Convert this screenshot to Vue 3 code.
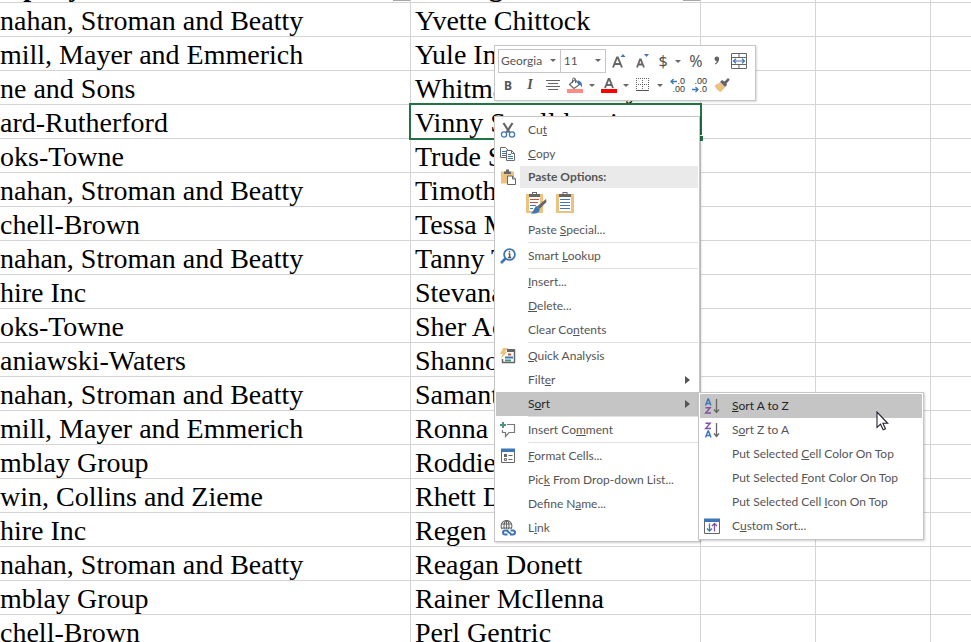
<script setup>
const rows = [
  ['nahan, Stroman and Beatty', 'Yvette Chittock'],
  ['mill, Mayer and Emmerich', 'Yule Ingold'],
  ['ne and Sons', 'Whitman McCarthy'],
  ['ard-Rutherford', 'Vinny Smallthwaite'],
  ['oks-Towne', 'Trude Sawyer'],
  ['nahan, Stroman and Beatty', 'Timothy'],
  ['chell-Brown', 'Tessa Marsh'],
  ['nahan, Stroman and Beatty', 'Tanny Tome'],
  ['hire Inc', 'Stevana'],
  ['oks-Towne', 'Sher Acton'],
  ['aniawski-Waters', 'Shannon'],
  ['nahan, Stroman and Beatty', 'Samantha'],
  ['mill, Mayer and Emmerich', 'Ronna'],
  ['mblay Group', 'Roddie'],
  ['win, Collins and Zieme', 'Rhett Dale'],
  ['hire Inc', 'Regen'],
  ['nahan, Stroman and Beatty', 'Reagan Donett'],
  ['mblay Group', 'Rainer McIlenna'],
  ['chell-Brown', 'Perl Gentric'],
]
const selectedRow = 3

// Labels are split as [before, access key, after].
const beforePaste = [
  { icon: 'cut', label: ['Cu', 't', ''] },
  { icon: 'copy', label: ['', 'C', 'opy'] },
]
const afterPaste = [
  { label: ['Paste ', 'S', 'pecial...'] },
  { sep: true },
  { icon: 'lookup', label: ['Smart ', 'L', 'ookup'] },
  { sep: true },
  { label: ['', 'I', 'nsert...'] },
  { label: ['', 'D', 'elete...'] },
  { label: ['Clear Co', 'n', 'tents'] },
  { sep: true },
  { icon: 'quick', label: ['', 'Q', 'uick Analysis'] },
  { label: ['Filt', 'e', 'r'], more: true },
  { label: ['S', 'o', 'rt'], more: true, active: true },
  { sep: true },
  { icon: 'comment', label: ['Insert Co', 'm', 'ment'] },
  { sep: true },
  { icon: 'format', label: ['', 'F', 'ormat Cells...'] },
  { label: ['Pic', 'k', ' From Drop-down List...'] },
  { label: ['Define N', 'a', 'me...'] },
  { icon: 'link', label: ['L', 'i', 'nk'] },
]
const sortItems = [
  { icon: 'az', label: ['', 'S', 'ort A to Z'], active: true },
  { icon: 'za', label: ['S', 'o', 'rt Z to A'] },
  { label: ['Put Selected ', 'C', 'ell Color On Top'] },
  { label: ['Put Selected ', 'F', 'ont Color On Top'] },
  { label: ['Put Selected Cell ', 'I', 'con On Top'] },
  { icon: 'custom', label: ['C', 'u', 'stom Sort...'] },
]

const icons = {
  cut: '<path d="M3.500 1 L9.500 10.500 M12.500 1 L6.500 10.500" stroke="#666" stroke-width="2.200" fill="none"/><g fill="none" stroke="#3f77b5" stroke-width="1.300"><circle cx="4" cy="12.500" r="2.600"/><circle cx="12" cy="12.500" r="2.600"/></g>',
  copy: '<g fill="#fff" stroke="#6a6a6a"><path d="M.5 1.500h5l3 3v7h-8z"/><path d="M6.500 4.500h5l3 3v7h-8z"/><path d="M11.500 4.500v3h3" fill="none"/></g><path d="M2 5.500h4M2 7.500h4M2 9.500h4M8 8.500h3M8 10.500h5M8 12.500h5" stroke="#3f77b5"/>',
  paste: '<path d="M1 2.500h13v12H1z" fill="#ecc27f"/><path d="M4 5V2.500h2V.5h3v2h2V5z" fill="#666"/><path d="M7.500 7h5l3 3v5.500h-8z" fill="#fff" stroke="#666"/><path d="M12.500 7v3h3" fill="none" stroke="#666"/>',
  lookup: '<circle cx="9.500" cy="6.500" r="5.400" fill="#fff" stroke="#3f77b5" stroke-width="1.800"/><path d="M5.500 10.500L1 15" stroke="#3f77b5" stroke-width="2.600"/><path d="M9.500 3v1.600M8.500 6h1.200v3.500M8 9.500h3.200" stroke="#555" stroke-width="1.400" fill="none"/>',
  quick: '<path d="M7 2.500h8M14.500 1.500v13M2 14.500h13M2.500 11v4" stroke="#666" stroke-width="1.500" fill="none"/><path d="M7 1h8v3H7z" fill="#666"/><path d="M3 0h5L5 4h2L1 11l1.500-5H0z" fill="#ecc27f"/><path d="M8 6.500h3" stroke="#d35230" stroke-width="2"/><path d="M5 9.500h8" stroke="#3f77b5" stroke-width="2"/><path d="M5 12.500h6" stroke="#4c9482" stroke-width="2"/>',
  comment: '<path d="M7 2.500h7.500v8H9l-3.500 4v-4h-3V8" fill="none" stroke="#777" stroke-width="1.200"/><path d="M3 0v6M0 3h6" stroke="#4c9482" stroke-width="2"/>',
  format: '<path d="M1.500 1.500h13v13h-13z" fill="#fff" stroke="#666"/><path d="M1 .5h14V4H1z" fill="#3f77b5"/><path d="M4 6h3v3H4z" fill="#666"/><path d="M4.500 10.500h2v2h-2z" fill="none" stroke="#666"/><path d="M8.500 7.500h4M8.500 11.500h4" stroke="#666"/>',
  link: '<g fill="none" stroke="#666" stroke-width="1.100"><circle cx="6.500" cy="6" r="5.400"/><ellipse cx="6.500" cy="6" rx="2.500" ry="5.400"/><path d="M1.500 4h10M1.500 8h10M6.500 1v10"/></g><path d="M2 9h14v7H2z" fill="#fff"/><g fill="none" stroke="#3f77b5" stroke-width="2"><path d="M8.500 10.500H5a2 2 0 0 0 0 4h2.500"/><path d="M10 14.500h3a2 2 0 0 0 0-4h-2.500"/><path d="M7 11l4 3"/></g>',
  az: '<path d="M1.500 7.500L4 1h.5L7 7.500M2.500 5.500h3.500" fill="none" stroke="#3f77b5" stroke-width="1.400"/><path d="M1.500 9.700h4.700L1.700 15H7" fill="none" stroke="#80539c" stroke-width="1.400"/><path d="M12.500 1v13M10 11.500l2.500 3 2.500-3" fill="none" stroke="#666" stroke-width="1.300"/>',
  za: '<path d="M1.500 1.200h4.700L1.700 6.500H7" fill="none" stroke="#80539c" stroke-width="1.400"/><path d="M1.500 15.500L4 9h.5L7 15.500M2.500 13.500h3.500" fill="none" stroke="#3f77b5" stroke-width="1.400"/><path d="M12.500 1v13M10 11.500l2.500 3 2.500-3" fill="none" stroke="#666" stroke-width="1.300"/>',
  custom: '<path d="M.5 1.500h15v14H.5z" fill="#fff" stroke="#666"/><path d="M0 .5h16V4H0z" fill="#3f77b5"/><path d="M5.500 5.500v7M3 10.500l2.500 2.500L8 10.500" fill="none" stroke="#3f77b5" stroke-width="1.300"/><path d="M10.500 13.500V6M8 8l2.500-2.500L13 8" fill="none" stroke="#80539c" stroke-width="1.300"/>',
}
</script>

<template>
  <main class="sheet">
    <table class="grid">
      <colgroup><col class="c-company"><col class="c-name"><col class="c-std"><col class="c-std"><col></colgroup>
      <thead>
        <tr>
          <th><div class="head"><span>mpany</span><button class="filter" aria-label="Filter company"></button></div></th>
          <th><div class="head named"><span>Manager</span><button class="filter" aria-label="Filter manager"></button></div></th>
          <th></th><th></th><th></th>
        </tr>
      </thead>
      <tbody>
        <tr v-for="(r, i) in rows" :key="i">
          <td>{{ r[0] }}</td>
          <td class="name" :class="{ selected: i === selectedRow }">{{ r[1] }}</td>
          <td></td><td></td><td></td>
        </tr>
      </tbody>
    </table>

    <div class="mini" role="toolbar" aria-label="Formatting">
      <div class="line">
        <label class="combo font"><select aria-label="Font"><option>Georgia</option></select><i class="caret"></i></label>
        <label class="combo size"><select aria-label="Font size"><option>11</option></select><i class="caret"></i></label>
        <button class="w26" aria-label="Increase font size"><svg width="16" height="16" viewBox="0 0 16 16"><path d="M2 14.500L6 4.500h.8L11 14.500M3.500 11h6" fill="none" stroke="#666" stroke-width="1.900"/><path d="M9.500 4L12 1l2.500 3z" fill="#3f77b5"/></svg></button>
        <button class="w22" aria-label="Decrease font size"><svg width="16" height="16" viewBox="0 0 16 16"><path d="M2 14.500L5 6.500h.8L9 14.500M3.500 11.500h4.500" fill="none" stroke="#666" stroke-width="1.800"/><path d="M9 1h5l-2.500 3z" fill="#3f77b5"/></svg></button>
        <button class="w18 sign">$</button>
        <button class="w12" aria-label="Currency options"><i class="caret"></i></button>
        <button class="w24 sign">%</button>
        <button class="w18" aria-label="Comma style"><svg width="8" height="10" viewBox="0 0 8 10"><path d="M1.500 2.800a2.300 2.300 0 0 1 4.700 0c0 2.500-1.500 4.500-3.900 5.700l-.5-.8c1.200-.8 1.800-1.600 1.900-2.600C2.500 5.200 1.500 4.200 1.500 2.800z" fill="#666"/></svg></button>
        <button class="w26" aria-label="Merge and center"><svg width="16" height="16" viewBox="0 0 16 16"><path d="M.5.500h15v15H.500zM.5 4.500h15M.5 11.500h15M8 .5v4M8 11.500v4" fill="none" stroke="#666"/><path d="M2.500 8h11M5 5.800L2.500 8 5 10.200M11 5.800L13.500 8 11 10.200" fill="none" stroke="#3f77b5" stroke-width="1.200"/></svg></button>
      </div>
      <div class="line">
        <button class="w20 bold">B</button>
        <button class="w24 italic">I</button>
        <button class="w22" aria-label="Center"><svg width="14" height="12" viewBox="0 0 14 12"><path d="M0 1.500h14M2 4.500h10M0 7.500h14M2 10.500h10" stroke="#666"/></svg></button>
        <button class="w22" aria-label="Fill color"><svg width="16" height="16" viewBox="0 0 16 16"><path d="M2.500 7.500L8 2.500l4.500 5L7 11.500z" fill="#fff" stroke="#666" stroke-width="1.200"/><path d="M5.500 6V2.500a1.500 1.500 0 0 1 3 0V6" fill="none" stroke="#666"/><path d="M10.500 3.500c3 0 5 2 4.500 7-1-1.500-1.500-3-3.500-3.500z" fill="#3f77b5"/><path d="M0 12h16v4H0z" fill="#ff8b82"/></svg></button>
        <button class="w12" aria-label="Fill options"><i class="caret"></i></button>
        <button class="w22" aria-label="Font color"><svg width="16" height="16" viewBox="0 0 16 16"><path d="M4 11L7.600 2h.8L12 11M5.500 8h5" fill="none" stroke="#666" stroke-width="1.900"/><path d="M0 12h16v4H0z" fill="#f00"/></svg></button>
        <button class="w12" aria-label="Font color options"><i class="caret"></i></button>
        <button class="w22" aria-label="Borders"><svg width="14" height="14" viewBox="0 0 14 14"><path d="M.5 0v12M6.500 0v12M12.500 0v12M0 .5h13M0 6.500h13" stroke="#666" stroke-dasharray="1 1"/><path d="M0 12.500h13" stroke="#555"/></svg></button>
        <button class="w12" aria-label="Border options"><i class="caret"></i></button>
        <button class="w22 dec" aria-label="Increase decimal"><span><svg width="7" height="7" viewBox="0 0 7 7"><path d="M7 3.500H1M3.500 1L1 3.500 3.500 6" fill="none" stroke="#3f77b5" stroke-width="1.300"/></svg>.0</span><span>.00</span></button>
        <button class="w22 dec" aria-label="Decrease decimal"><span>.00</span><span><svg width="7" height="7" viewBox="0 0 7 7"><path d="M0 3.500h6M3.500 1L6 3.500 3.500 6" fill="none" stroke="#3f77b5" stroke-width="1.300"/></svg>.0</span></button>
        <button class="w24" aria-label="Format painter"><svg width="16" height="16" viewBox="0 0 16 16"><path d="M.5 8.500L6 5.500l5 5-4 4.500c-2 0-5-3-6.500-6.500z" fill="#ecc27f"/><path d="M6 5l2-2 2.500 1.500L14 1l1.800 1.800L12.500 6.500 13 8l-2 2z" fill="#666"/></svg></button>
      </div>
    </div>

    <div class="menu context" role="menu">
      <button v-for="m in beforePaste" :key="m.icon" class="item" role="menuitem">
        <svg class="icon" width="16" height="16" viewBox="0 0 16 16" v-html="icons[m.icon]"></svg>
        <span>{{ m.label[0] }}<u>{{ m.label[1] }}</u>{{ m.label[2] }}</span>
      </button>
      <div class="paste-head">
        <svg class="icon" width="16" height="16" viewBox="0 0 16 16" v-html="icons.paste"></svg>
        <strong>Paste Options:</strong>
      </div>
      <div class="paste-row">
        <button aria-label="Keep source formatting"><svg width="22" height="24" viewBox="0 0 22 24"><path d="M1 3h17v19H1z" fill="#ecc27f"/><path d="M4 5h11v15H4z" fill="#fff"/><path d="M4 6V3h3V1h5v2h3v3z" fill="#666"/><path d="M8 2.500h3" stroke="#fff"/><path d="M5 9l1-1 1 1 1-1 1 1 1-1 1 1 1-1 1 1 1-1M5 12l1-1 1 1 1-1 1 1 1-1 1 1 1-1 1 1" fill="none" stroke="#d35230"/><path d="M5 14.500h6M5 17.500h3" stroke="#3f77b5"/><path d="M21 8l.5 3-7 7-2.500-2.500z" fill="#666"/><path d="M11.500 15l3.500 3.500c-1 4-5 4.500-9.500 4 3-1 3-5.500 6-7.500z" fill="#3f77b5"/></svg></button>
        <button aria-label="Paste values"><svg width="22" height="24" viewBox="0 0 22 24"><path d="M2 3h18v19H2z" fill="#ecc27f"/><path d="M5 5h12v15H5z" fill="#fff"/><path d="M5 6V3h3.500V1h5v2H17v3z" fill="#666"/><path d="M9.500 2.500h3" stroke="#fff"/><path d="M6 8.500h10M6 11.500h10M6 14.500h10M6 17.500h10" stroke="#3f77b5"/></svg></button>
      </div>
      <template v-for="(m, i) in afterPaste" :key="i">
        <hr v-if="m.sep">
        <button v-else class="item" :class="{ active: m.active }" role="menuitem">
          <svg class="icon" width="16" height="16" viewBox="0 0 16 16" v-html="m.icon ? icons[m.icon] : ''"></svg>
          <span>{{ m.label[0] }}<u>{{ m.label[1] }}</u>{{ m.label[2] }}</span>
          <i v-if="m.more" class="more"></i>
        </button>
      </template>
    </div>

    <div class="menu sub" role="menu">
      <button v-for="(m, i) in sortItems" :key="i" class="item" :class="{ active: m.active }" role="menuitem">
        <svg class="icon" width="16" height="16" viewBox="0 0 16 16" v-html="m.icon ? icons[m.icon] : ''"></svg>
        <span>{{ m.label[0] }}<u>{{ m.label[1] }}</u>{{ m.label[2] }}</span>
      </button>
    </div>

    <svg class="pointer" width="13" height="20" viewBox="0 0 13 20"><path d="M1 1v15.500l3.500-3.300 2.700 5.600 2.300-1-2.600-5.500h4.800z" fill="#fff" stroke="#223" stroke-width="1.100"/></svg>
  </main>
</template>

<style>
body { margin: 0; background: #fff; }
</style>

<style scoped>
.sheet { position: relative; height: 100vh; overflow: hidden; }
.grid { width: 100%; table-layout: fixed; border-collapse: separate; border-spacing: 0; font-family: "Liberation Serif", serif; font-size: 28px; color: #000; }
.c-company { width: 411px; }
.c-name { width: 290px; }
.c-std { width: 115px; }
th, td { box-sizing: border-box; padding: 0; border-right: 1px solid #d4d4d4; border-bottom: 1px solid #d4d4d4; text-align: left; white-space: nowrap; }
th:last-child, td:last-child { border-right: 0; }
td { height: 34px; padding-top: 2px; line-height: 31px; }
.name { padding-left: 4px; }
.head { display: flex; align-items: flex-end; justify-content: space-between; height: 2px; overflow: hidden; line-height: 31px; }
.head.named { padding-left: 8px; }
.filter { align-self: flex-start; width: 17px; height: 1px; padding: 0; border: 0; background: #a6a6ab; }
.selected { position: relative; }
.selected::before { content: ""; position: absolute; inset: -2px; border: 2px solid #217346; }
.selected::after { content: ""; position: absolute; right: -3px; bottom: -3px; width: 4px; height: 5px; background: #217346; border-top: 1px solid #fff; }

button, select { font-family: Lato, "Noto Sans", sans-serif; font-size: 12px; color: #555; }
button { border: 0; padding: 0; background: none; }

.mini { position: absolute; left: 494px; top: 45px; box-sizing: border-box; width: 262px; padding: 3px; background: #fff; border: 1px solid #c6c6c6; box-shadow: 1px 1px 2px rgba(0, 0, 0, .15); }
.line { display: flex; height: 24px; }
.line button { display: flex; align-items: center; justify-content: center; flex: none; }
.w12 { width: 12px; } .w18 { width: 18px; } .w20 { width: 20px; }
.w22 { width: 22px; } .w24 { width: 24px; } .w26 { width: 26px; }
.combo { display: flex; align-items: center; box-sizing: border-box; height: 24px; border: 1px solid #c6c6c6; padding: 0 4px 2px 2px; }
.combo select { flex: 1; min-width: 0; appearance: none; border: 0; padding: 0; background: none; }
.font { width: 64px; }
.size { width: 46px; border-left: 0; padding-left: 3px; }
.caret { border: 3px solid transparent; border-top-color: #666; border-bottom: 0; }
.line .sign { font-family: "Noto Sans", sans-serif; font-size: 16px; }
.line .bold { font-family: "Noto Sans", sans-serif; font-weight: 700; font-size: 12px; }
.line .italic { font-family: "Liberation Serif", serif; font-style: italic; font-weight: 700; font-size: 14px; }
.line .dec { flex-direction: column; align-items: flex-end; padding-right: 3px; font-family: "Liberation Sans", sans-serif; font-size: 9px; line-height: 8px; color: #333; }
.dec span { display: flex; align-items: center; }

.menu { position: absolute; box-sizing: border-box; padding: 1px; background: #fff; border: 1px solid #c6c6c6; box-shadow: 1px 1px 2px rgba(0, 0, 0, .2); font-family: Lato, "Noto Sans", sans-serif; font-size: 12px; color: #555; }
.context { left: 494px; top: 116px; width: 206px; }
.sub { left: 698px; top: 392px; width: 226px; }
.item { display: flex; align-items: center; width: 100%; height: 24px; padding: 0 8px 0 4px; text-align: left; white-space: nowrap; }
.item span { flex: 1; padding: 0 0 2px 12px; }
.icon { flex: none; }
.active { background: #c5c5c5; color: #262626; }
.more { border: 4px solid transparent; border-left: 5px solid #555; border-right: 0; }
.menu hr { height: 1px; margin: 0 0 1px 32px; border: 0; background: #e1e1e1; }
.paste-head { display: flex; align-items: center; height: 22px; padding-left: 4px; }
.paste-head strong { flex: 1; margin-left: 4px; padding-left: 8px; line-height: 22px; background: #eaeaea; }
.paste-row { display: flex; align-items: center; gap: 7px; height: 30px; padding-left: 29px; }
.paste-row button, .paste-row svg { display: block; }
.pointer { position: absolute; left: 876px; top: 411px; }
</style>
